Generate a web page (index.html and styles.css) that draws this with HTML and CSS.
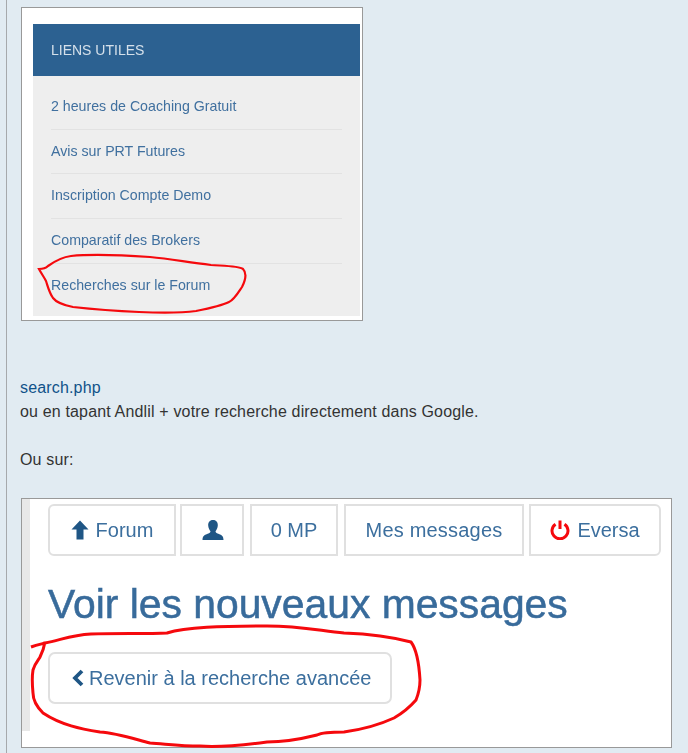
FILE: index.html
```html
<!DOCTYPE html>
<html lang="fr">
<head>
    <meta charset="UTF-8">
    <title>Recherches sur le Forum</title>
    <link rel="stylesheet" href="styles.css">
</head>
<body>
    <div class="post">
        <div class="shot shot-links">
            <div class="widget">
                <div class="widget-title">LIENS UTILES</div>
                <ul class="widget-list">
                    <li>2 heures de Coaching Gratuit</li>
                    <li>Avis sur PRT Futures</li>
                    <li>Inscription Compte Demo</li>
                    <li>Comparatif des Brokers</li>
                    <li>Recherches sur le Forum</li>
                </ul>
            </div>
            <svg class="scribble" viewBox="0 0 342 314">
                <path d="M18 262 C21 262 25 261 27 259 C34 254 42 250 50 249 C70 247 100 248 129 250 C150 252 165 255 190 258 C205 259 218 259 222 262 C226 266 225 272 221 280 C217 286 213 293 208 295 C200 299 190 301 175 304 C160 306 140 306 118 305 C95 304 70 302 52 300 C42 298 35 295 32 291 C28 285 27 280 25 274 C23 270 20 266 18 262 Z"/>
            </svg>
        </div>

        <div class="message">
            <a class="msg-link" href="#">search.php</a><br>
            ou en tapant Andlil + votre recherche directement dans Google.<br>
            <br>
            Ou sur:
        </div>

        <div class="shot shot-forum">
            <div class="forum-page">
                <nav class="forum-nav">
                    <a class="nav-btn nav-forum" href="#">
                        <svg class="icon" viewBox="0 0 18 20"><path d="M9 0.500 L17.500 9.500 H12.500 V19.500 H5.500 V9.500 H0.500 Z"/></svg>
                        Forum
                    </a>
                    <a class="nav-btn nav-user" href="#">
                        <svg class="icon icon-user" viewBox="0 0 22 20"><path d="M11 0 C14.500 0 16 2.500 15.800 5.500 C15.700 8 14.500 10 13.500 11.200 C13.600 12.800 15 13.200 17 14 C19.500 15 21.500 16 21.500 20 H0.500 C0.500 16 2.500 15 5 14 C7 13.200 8.400 12.800 8.500 11.200 C7.500 10 6.300 8 6.200 5.500 C6 2.500 7.500 0 11 0 Z"/></svg>
                    </a>
                    <a class="nav-btn nav-mp" href="#">0 MP</a>
                    <a class="nav-btn nav-msgs" href="#">Mes messages</a>
                    <a class="nav-btn nav-logout" href="#">
                        <svg class="icon icon-power" viewBox="0 0 20 20"><path d="M5.500 4.200 A8 8 0 1 0 14.500 4.200 M10 0.500 V9"/></svg>
                        Eversa
                    </a>
                </nav>
                <h1 class="forum-title">Voir les nouveaux messages</h1>
                <a class="back-btn" href="#">
                    <svg class="icon icon-back" viewBox="0 0 12 18"><path d="M10 2 L3 9 L10 16"/></svg>
                    Revenir à la recherche avancée
                </a>
            </div>
            <svg class="scribble scribble-thick" viewBox="0 0 651 250">
                <path d="M10 149 C15 147 20 146 24 145 C40 142 50 137 70 136 C95 135 125 136 146 135 C165 129 200 128 246 128 C280 128 300 133 323 135 C350 136 375 140 390 144 C396 152 398 165 399 182 C399 190 397 197 395 202 C388 210 380 216 373 220 C360 226 345 231 323 234 C310 234 300 235 296 237 C280 241 260 244 246 244 C215 248 190 249 179 248 C160 248 145 246 129 245 C110 240 95 235 79 234 C60 231 40 227 22 215 C14 207 12 200 12 195 C11 185 11 178 12 172 C14 165 19 160 19 159 C21 155 23 150 24 144"/>
            </svg>
        </div>
    </div>
</body>
</html>
```

FILE: styles.css
```css
body {
    margin: 0;
    background-color: #e1ebf2;
    font-family: "Liberation Sans", Arial, sans-serif;
    font-size: 16px;
    color: #333;
}
a {
    text-decoration: none;
}
.post {
    margin-left: 6px;
    padding: 7px 0 0 14px;
    border-left: 1px solid #a6a9ac;
    height: 746px;
    overflow: hidden;
}
.shot {
    position: relative;
    background-color: white;
    border: 1px solid #999;
}
.scribble {
    position: absolute;
    top: -1px;
    left: -1px;
    fill: none;
    stroke: #f5090d;
    stroke-width: 2.200px;
    filter: blur(0.3px);
}
.scribble-thick {
    stroke-width: 3px;
}

/* first screenshot */
.shot-links {
    padding: 16px 2px 4px 11px;
    width: 327px;
    height: 292px;
}
.shot-links .scribble {
    width: 342px;
    height: 314px;
}
.widget {
    height: 292px;
    background-color: #eee;
    filter: blur(0.5px);
}
.widget-title {
    height: 52px;
    line-height: 52px;
    padding-left: 18px;
    background-color: #2c6191;
    color: #d5e0ea;
    font-size: 14px;
}
.widget-list {
    margin: 0;
    padding: 9px 18px 0;
    list-style: none;
    font-size: 14.200px;
    color: #40709f;
}
.widget-list li {
    height: 44.700px;
    line-height: 43px;
    border-bottom: 1px solid #e2e2e2;
    box-sizing: border-box;
}
.widget-list li:last-child {
    border-bottom: none;
}

/* text between the screenshots */
.message {
    margin: 55px 0 26px -1px;
    line-height: 24px;
    letter-spacing: 0.160px;
}
.msg-link {
    color: #105289;
}

/* second screenshot */
.shot-forum {
    width: 649px;
    height: 248px;
}
.shot-forum .scribble {
    width: 651px;
    height: 250px;
}
.forum-page {
    height: 227px;
    padding: 5px 0 0 18px;
    border-left: 8px solid #e8e8e8;
    filter: blur(0.4px);
}
.forum-nav {
    display: flex;
    gap: 4px;
}
.nav-btn {
    display: flex;
    align-items: center;
    justify-content: center;
    gap: 7px;
    height: 52px;
    box-sizing: border-box;
    border: 2px solid #e0e0e0;
    color: #3c6f9e;
    font-size: 20px;
}
.nav-forum {
    width: 128px;
    border-radius: 6px 0 0 6px;
}
.nav-user {
    width: 64px;
}
.nav-mp {
    width: 88px;
    margin-left: 2px;
}
.nav-msgs {
    width: 180px;
    margin-left: 2px;
    letter-spacing: 0.200px;
}
.nav-logout {
    width: 132px;
    margin-left: 1px;
    border-radius: 0 6px 6px 0;
}
.icon {
    width: 18px;
    height: 20px;
    fill: #1f5685;
}
.icon-user {
    width: 22px;
    margin-left: 2px;
}
.icon-power {
    width: 20px;
    fill: none;
    stroke: #f5090d;
    stroke-width: 3px;
}
.forum-title {
    margin: 21px 0 21px;
    font-size: 40.850px;
    font-weight: normal;
    line-height: 54px;
    color: #386b9b;
    -webkit-text-stroke: 0.500px #386b9b;
}
.back-btn {
    display: inline-flex;
    align-items: center;
    gap: 5px;
    width: 344px;
    height: 52px;
    box-sizing: border-box;
    padding-left: 22px;
    border: 2px solid #e0e0e0;
    border-radius: 7px;
    color: #3c6f9e;
    font-size: 20px;
}
.icon-back {
    width: 12px;
    height: 18px;
    fill: none;
    stroke: #1f5685;
    stroke-width: 3.800px;
}
```
